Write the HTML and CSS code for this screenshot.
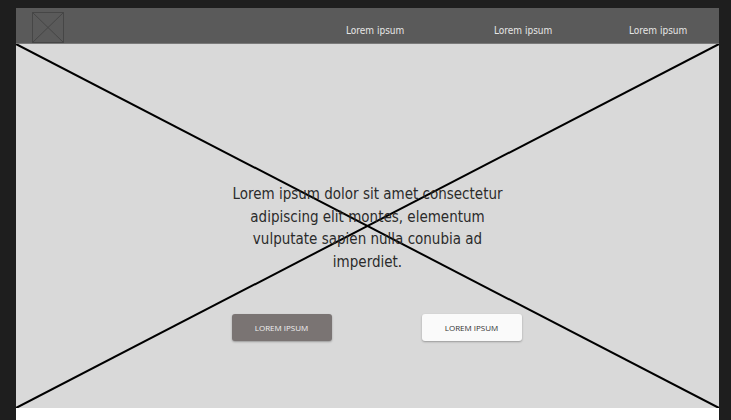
FILE: index.html
```html
<!DOCTYPE html>
<html>
<head>
<meta charset="utf-8">
<link rel="stylesheet" href="styles.css">
</head>
<body>
<div class="frame">
  <header class="topbar">
    <div class="logo">
      <svg width="32" height="31" viewBox="0 0 32 31" preserveAspectRatio="none">
        <rect x="0.5" y="0.5" width="31" height="30" fill="none" stroke="#464646" stroke-width="1"/>
        <line x1="0.5" y1="0.5" x2="31.5" y2="30.5" stroke="#464646" stroke-width="1"/>
        <line x1="31.5" y1="0.5" x2="0.5" y2="30.5" stroke="#464646" stroke-width="1"/>
      </svg>
    </div>
    <nav class="nav">
      <a class="nav-item n1">Lorem ipsum</a>
      <a class="nav-item n2">Lorem ipsum</a>
      <a class="nav-item n3">Lorem ipsum</a>
    </nav>
  </header>
  <section class="hero">
    <svg class="cross" viewBox="0 0 703 364" preserveAspectRatio="none">
      <line x1="0" y1="0" x2="703" y2="364" stroke="#000" stroke-width="2"/>
      <line x1="0" y1="364" x2="703" y2="0" stroke="#000" stroke-width="2"/>
    </svg>
    <div class="content">
      <p class="lead">Lorem ipsum dolor sit amet consectetur adipiscing elit montes, elementum vulputate sapien nulla conubia ad imperdiet.</p>
      <div class="actions">
        <button class="btn btn-dark">LOREM IPSUM</button>
        <button class="btn btn-light">LOREM IPSUM</button>
      </div>
    </div>
  </section>
  <div class="below"></div>
</div>
</body>
</html>
```
FILE: styles.css
```css
html, body {
  margin: 0;
  padding: 0;
  background: #1e1e1e;
  height: 100%;
  overflow: hidden;
}
.frame {
  margin: 8px 12px 0 16px;
  width: 703px;
}
.topbar {
  height: 35px;
  background: #5a5a5a;
  border-bottom: 1px solid #7a7a7a;
  display: flex;
  align-items: center;
}
.logo {
  margin-left: 16px;
  margin-top: 4px;
  height: 31px;
  align-self: flex-start;
}
.logo svg { display: block; }
.nav {
  display: flex;
  margin-left: auto;
  margin-right: 33px;
  padding-top: 10px;
}
.nav-item {
  font-family: "DejaVu Sans", sans-serif;
  font-stretch: condensed;
  font-size: 10px;
  color: #e6e6e6;
  width: 57px;
  white-space: nowrap;
  text-align: center;
}
.n2 { margin-left: 91px; }
.n3 { margin-left: 78px; }
.hero {
  position: relative;
  height: 364px;
  background: #d9d9d9;
  display: flex;
  justify-content: center;
}
.cross {
  position: absolute;
  left: 0;
  top: 0;
  width: 703px;
  height: 364px;
}
.content {
  position: relative;
  width: 290px;
  padding-top: 139px;
  display: flex;
  flex-direction: column;
}
.lead {
  margin: 0;
  font-family: "DejaVu Sans", sans-serif;
  font-stretch: condensed;
  font-size: 15px;
  line-height: 22.7px;
  color: #2b2b2b;
  text-align: center;
}
.actions {
  display: flex;
  justify-content: space-between;
  width: 290px;
  margin-top: 40px;
  margin-left: 9px;
}
.btn {
  width: 100px;
  height: 27px;
  border: none;
  border-radius: 3px;
  font-family: "Open Sans", sans-serif;
  font-size: 8px;
  padding: 0;
  box-shadow: 0 1px 2px rgba(0,0,0,0.3);
}
.btn-dark {
  background: #7a7473;
  color: #f0f0f0;
}
.btn-light {
  background: #fafafa;
  color: #333;
}
.below {
  height: 20px;
  background: #fff;
}
```
